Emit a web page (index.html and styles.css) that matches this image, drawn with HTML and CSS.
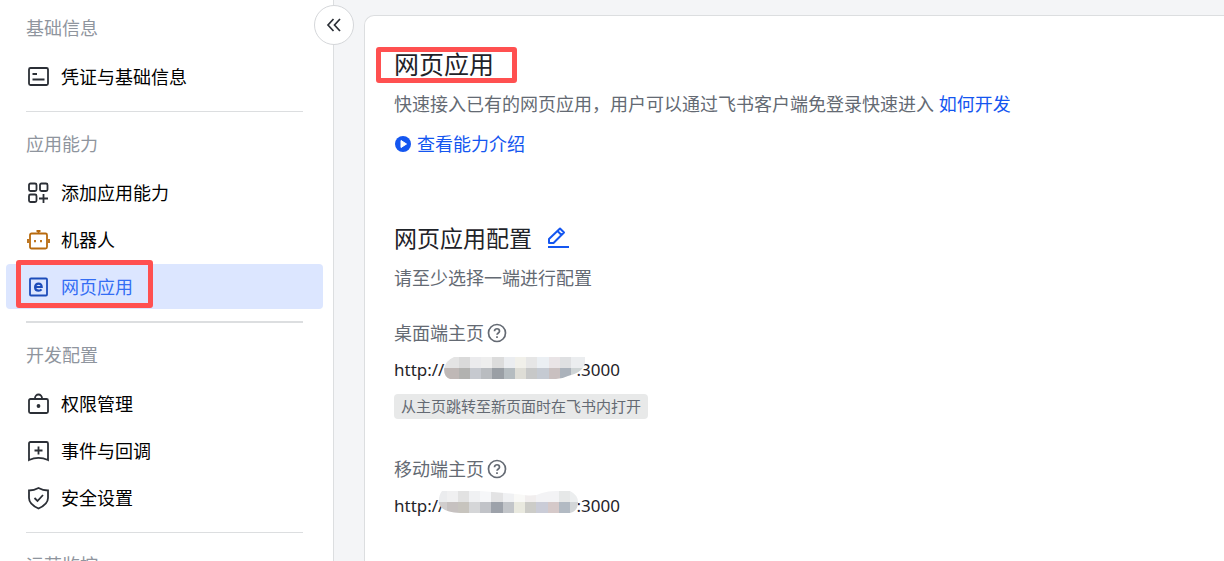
FILE: index.html
```
<!DOCTYPE html>
<html lang="zh-CN">
<head>
  <meta charset="UTF-8">
  <meta name="viewport" content="width=device-width, initial-scale=1.0">
  <title>网页应用</title>
  <link rel="stylesheet" href="styles.css">
</head>
<body>
  <div class="layout">
    <aside class="sidebar">
      <button class="collapse" type="button" aria-label="收起">
        <svg width="16" height="16" viewBox="0 0 16 16" fill="none" stroke="#2b2f36" stroke-width="1.7"><path d="M7.500 2 2 8l5.500 6M14 2 8.500 8l5.500 6"/></svg>
      </button>

      <!-- 侧边导航 -->
      <nav class="menu">
        <section class="group">
          <h2>基础信息</h2>
          <a class="item" href="#">
            <svg class="icon" viewBox="0 0 22 22"><rect x="2" y="2" width="19" height="17" rx="1.500"/><path d="M5.500 8H10M5.500 13.500h12"/></svg>
            <span>凭证与基础信息</span>
          </a>
        </section>

        <section class="group thick">
          <h2>应用能力</h2>
          <a class="item" href="#">
            <svg class="icon" viewBox="0 0 22 22"><rect x="2" y="1.500" width="7.500" height="7.500" rx="1.500"/><rect x="13" y="1.500" width="7.500" height="7.500" rx="1.500"/><rect x="2" y="12.500" width="7.500" height="7.500" rx="1.500"/><path d="M16.500 12v9M12 16.500h9"/></svg>
            <span>添加应用能力</span>
          </a>
          <a class="item" href="#">
            <svg class="icon robot" viewBox="0 0 22 22"><rect x="3" y="4.500" width="17" height="15" rx="1.500"/><path d="M11.500 4V1.500M9.500 2h4M1 10v4M22 10v4M8 11v2.200M14 11v2.200"/></svg>
            <span>机器人</span>
          </a>
          <a class="item active" href="#">
            <svg class="icon web" viewBox="0 0 22 22"><rect x="3" y="2.500" width="17" height="17" rx="1"/><path class="bold" d="M8.200 11h6.500c0-2-1.200-3.400-3.200-3.400s-3.400 1.500-3.400 3.600 1.400 3.400 3.500 3.400c1.300 0 2.300-.5 2.900-1.300"/></svg>
            <span>网页应用</span>
            <i class="mark"></i>
          </a>
        </section>

        <section class="group">
          <h2>开发配置</h2>
          <a class="item" href="#">
            <svg class="icon" viewBox="0 0 22 22"><rect x="2" y="6" width="19" height="14" rx="1.500"/><path d="M8 6V5a3.500 3.500 0 0 1 7 0v1"/><circle class="dot" cx="11.500" cy="13" r="1.900"/></svg>
            <span>权限管理</span>
          </a>
          <a class="item" href="#">
            <svg class="icon" viewBox="0 0 22 22"><path d="M3.500 2h16c1 0 1.500.5 1.500 1.500V20c-6-2.700-13-2.700-19 0V3.500C2 2.500 2.500 2 3.500 2zM11.500 6.500v8M7.500 10.500h8"/></svg>
            <span>事件与回调</span>
          </a>
          <a class="item" href="#">
            <svg class="icon" viewBox="0 0 22 22"><path d="M11.500 1c3 1.700 6 2.500 9.500 2.500V11c0 5-4 8-9.500 10.500C6 19 2 16 2 11V3.500C5.500 3.500 8.500 2.700 11.500 1zM7.500 11l3 3 5.500-6"/></svg>
            <span>安全设置</span>
          </a>
        </section>

        <section class="group">
          <h2>运营监控</h2>
        </section>
      </nav>
    </aside>

    <main class="content">
      <div class="card">
        <h1>网页应用<i class="mark"></i></h1>
        <p class="desc">快速接入已有的网页应用，用户可以通过飞书客户端免登录快速进入 <a href="#">如何开发</a></p>
        <a class="intro" href="#">
          <svg width="18" height="18" viewBox="0 0 18 18"><circle cx="9" cy="9" r="8" fill="#1456f0"/><path d="M7 5.500v7L12.500 9z" fill="#fff" stroke="#fff" stroke-linejoin="round"/></svg>
          <span>查看能力介绍</span>
        </a>

        <div class="config-head">
          <h2>网页应用配置</h2>
          <button class="edit" type="button" aria-label="编辑">
            <svg width="22" height="22" viewBox="0 0 22 22" fill="none" stroke="#1456f0" stroke-width="2" stroke-linejoin="round"><path d="M2 16v-4L13 1.500 17 5.500 6.500 16zM10.500 4l4 4"/><path d="M1 20h21"/></svg>
          </button>
        </div>
        <p class="hint">请至少选择一端进行配置</p>

        <!-- 桌面端 -->
        <section class="field">
          <h3>桌面端主页
            <svg class="help" viewBox="0 0 20 20"><circle cx="10" cy="10" r="8.500"/><path d="M7.500 8.200c0-3.300 5-3.300 5 0 0 1.700-2.500 1.800-2.500 3.600M10 13.200v1.800"/></svg>
          </h3>
          <div class="url">
            <span>http://</span>
            <svg class="mosaic" viewBox="0 0 141 22">
              <clipPath id="blurA"><path d="M10 0H141V6C139 15 130 17 124 19Q118 22 112 22H6Q0 20 0 12 2 3 10 0z"/></clipPath>
              <g clip-path="url(#blurA)" shape-rendering="crispEdges">
                <path fill="#e4e4e4" d="M0 0h15v11H0z"/><path fill="#dadada" d="M15 0h11v11H15z"/><path fill="#ebebed" d="M26 0h11v11H26z"/><path fill="#eee" d="M37 0h11v11H37z"/><path fill="#dcdcdc" d="M48 0h12v11H48z"/><path fill="#ebedf0" d="M60 0h11v11H60z"/><path fill="#f1f0ea" d="M71 0h11v11H71z"/><path fill="#e6e6e6" d="M82 0h11v11H82z"/><path fill="#ebeff3" d="M93 0h12v11H93z"/><path fill="#e9e4e6" d="M105 0h11v11h-11z"/><path fill="#dfe0e2" d="M116 0h11v11h-11z"/><path fill="#ebedef" d="M127 0h14v11h-14z"/>
                <path fill="#bfb8b6" d="M0 11h15v11H0z"/><path fill="#b2b2b0" d="M15 11h11v11H15z"/><path fill="#c6c9cf" d="M26 11h11v11H26z"/><path fill="#b9bcc0" d="M37 11h11v11H37z"/><path fill="#9a9fa5" d="M48 11h12v11H48z"/><path fill="#b5bcc0" d="M60 11h11v11H60z"/><path fill="#deddd6" d="M71 11h11v11H71z"/><path fill="#c7c8c8" d="M82 11h11v11H82z"/><path fill="#c5cad2" d="M93 11h12v11H93z"/><path fill="#c9c0c0" d="M105 11h11v11h-11z"/><path fill="#abb2bb" d="M116 11h11v11h-11z"/><path fill="#ced4d5" d="M127 11h14v11h-14z"/>
              </g>
            </svg>
            <span>:3000</span>
          </div>
          <span class="tag">从主页跳转至新页面时在飞书内打开</span>
        </section>

        <!-- 移动端 -->
        <section class="field">
          <h3>移动端主页
            <svg class="help" viewBox="0 0 20 20"><circle cx="10" cy="10" r="8.500"/><path d="M7.500 8.200c0-3.300 5-3.300 5 0 0 1.700-2.500 1.800-2.500 3.600M10 13.200v1.800"/></svg>
          </h3>
          <div class="url">
            <span>http://</span>
            <svg class="mosaic early" viewBox="0 0 141 22">
              <clipPath id="blurB"><path d="M4 0H42Q70 2 90 4.500 98 5 104 2 110 0 118 0H132Q140 4 140 11 140 20 132 22H22Q4 21 1 13 0 5 4 0z"/></clipPath>
              <g clip-path="url(#blurB)" shape-rendering="crispEdges">
                <path fill="#ebecee" d="M0 0h9v11H0z"/><path fill="#f0f0f1" d="M9 0h11v11H9z"/><path fill="#e2e2e2" d="M20 0h11v11H20z"/><path fill="#f0f1f3" d="M31 0h11v11H31z"/><path fill="#f6f7f9" d="M42 0h11v11H42z"/><path fill="#e3e3e4" d="M53 0h12v11H53z"/><path fill="#f0f1f3" d="M65 0h11v11H65z"/><path fill="#f9f9f7" d="M76 0h11v11H76z"/><path fill="#f1eeee" d="M87 0h11v11H87z"/><path fill="#f3f3f5" d="M98 0h23v11H98z"/><path fill="#e6e8e8" d="M121 0h11v11h-11z"/><path fill="#eceeef" d="M132 0h9v11h-9z"/>
                <path fill="#d0cdcd" d="M0 11h9v11H0z"/><path fill="#c6c1c0" d="M9 11h11v11H9z"/><path fill="#c7c4be" d="M20 11h11v11H20z"/><path fill="#d5d6d8" d="M31 11h11v11H31z"/><path fill="#c1c3c8" d="M42 11h11v11H42z"/><path fill="#9da2aa" d="M53 11h12v11H53z"/><path fill="#c2c5c9" d="M65 11h11v11H65z"/><path fill="#e9e9df" d="M76 11h11v11H76z"/><path fill="#ccccc8" d="M87 11h11v11H87z"/><path fill="#caccd7" d="M98 11h12v11H98z"/><path fill="#d5c9c9" d="M110 11h11v11h-11z"/><path fill="#b2bac3" d="M121 11h11v11h-11z"/><path fill="#d3d6d8" d="M132 11h9v11h-9z"/>
              </g>
            </svg>
            <span>:3000</span>
          </div>
        </section>
      </div>
    </main>
  </div>
</body>
</html>
```
FILE: styles.css
```
* { box-sizing: border-box; }
body {
  margin: 0;
  font-family: "Noto Sans", "Noto Sans CJK SC", sans-serif;
  font-size: 18px;
  line-height: 24px;
  color: #1f2329;
  background: #f4f5f7;
}
h1, h2, h3, p { margin: 0; font-weight: normal; }
a { color: #1456f0; text-decoration: none; }
button { padding: 0; border: none; background: none; cursor: pointer; }
svg { display: block; flex: none; }

.layout {
  display: flex;
  height: 100vh;
  overflow: hidden;
}

/* sidebar */
.sidebar {
  position: relative;
  flex: none;
  width: 334px;
  background: #fff;
  border-right: 1px solid #dcdee0;
}
.collapse {
  position: absolute;
  top: 5px;
  right: -21px;
  width: 40px;
  height: 40px;
  display: flex;
  align-items: center;
  justify-content: center;
  background: #fff;
  border: 1px solid #d5d7da;
  border-radius: 50%;
}
.menu {
  height: 100%;
  overflow: hidden;
  padding: 16px 10px 0 6px;
}
.group {
  display: flex;
  flex-direction: column;
  gap: 2px;
}
.group h2 {
  margin: 0 20px 12px;
  font-size: 18px;
  color: #8f959e;
}
.group:not(:last-child)::after {
  content: "";
  height: 1px;
  margin: 10px 20px 20px;
  background: #dcdee0;
}
.group.thick::after { height: 2px; }
.item {
  position: relative;
  display: flex;
  align-items: center;
  gap: 12px;
  height: 45px;
  padding-left: 21px;
  border-radius: 4px;
  color: #000;
}
.item.active {
  background: #dce6ff;
  color: #336df4;
}
.icon {
  width: 22px;
  height: 22px;
  overflow: visible;
  fill: none;
  stroke: #2b2f36;
  stroke-width: 1.8;
}
.icon.robot { stroke: #b86a0e; }
.icon.web { stroke: #1c4cba; }
.icon .bold { stroke-width: 2.2; }
.icon .dot { fill: #2b2f36; stroke: none; }

/* red highlight frames */
.mark {
  position: absolute;
  border: 5px solid #ff5050;
  border-radius: 3px;
}
.item .mark {
  left: 10px;
  top: -4px;
  width: 137px;
  height: 48px;
}
h1 .mark {
  left: -18px;
  top: 0;
  width: 141px;
  height: 36px;
}

/* content */
.content {
  flex: 1;
  min-width: 0;
  padding: 15px 0 0 30px;
}
.card {
  height: 100%;
  padding: 31px 29px 0;
  background: #fff;
  border: 1px solid #dcdee0;
  border-width: 1px 0 0 1px;
  border-radius: 10px 0 0 0;
}
h1 {
  position: relative;
  font-size: 25px;
  line-height: 34px;
}
.desc {
  margin-top: 11px;
  color: #646a73;
}
.intro {
  display: flex;
  align-items: center;
  gap: 5px;
  width: fit-content;
  margin-top: 16px;
}
.config-head {
  display: flex;
  align-items: center;
  gap: 15px;
  margin-top: 66px;
}
.config-head h2 {
  font-size: 23px;
  line-height: 32px;
}
.hint {
  margin-top: 12px;
  color: #646a73;
}
.field { margin-top: 31px; }
.field + .field { margin-top: 38px; }
.field h3 {
  display: flex;
  align-items: center;
  gap: 3px;
  font-size: 18px;
  color: #646a73;
}
.help {
  width: 20px;
  height: 20px;
  fill: none;
  stroke: #646a73;
  stroke-width: 1.7;
}
.url {
  display: flex;
  align-items: center;
  margin-top: 13px;
  font-size: 17px;
}
.mosaic {
  position: relative;
  width: 141px;
  height: 22px;
  margin: -5px -9px 0 0;
}
.mosaic.early { margin: -8px -3px 0 -6px; }
.tag {
  display: inline-block;
  margin-top: 12px;
  padding: 0 7px;
  font-size: 15px;
  line-height: 25px;
  color: #646a73;
  background: #e8e9e9;
  border-radius: 4px;
}
```
